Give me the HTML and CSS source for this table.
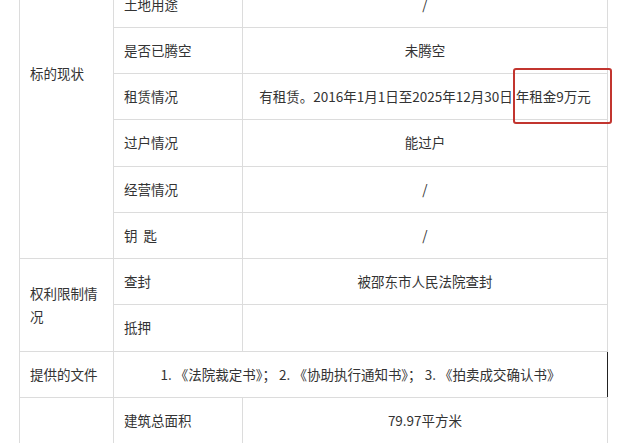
FILE: index.html
```html
<!DOCTYPE html>
<html>
<head>
  <title>标的物情况</title>
  <link rel="stylesheet" href="styles.css">
</head>
<body>
  <div class="page">
    <table class="info-table">
      <colgroup>
        <col class="col-head">
        <col class="col-name">
        <col class="col-value">
      </colgroup>
      <tbody>
        <tr>
          <td class="group" rowspan="8">标的现状</td>
          <td class="name">房屋用途</td>
          <td class="value">住宅</td>
        </tr>
        <tr>
          <td class="name">建筑结构</td>
          <td class="value">/</td>
        </tr>
        <tr>
          <td class="name">土地用途</td>
          <td class="value">/</td>
        </tr>
        <tr>
          <td class="name">是否已腾空</td>
          <td class="value">未腾空</td>
        </tr>
        <tr>
          <td class="name">租赁情况</td>
          <td class="value rent">
            有租赁。2016年1月1日至2025年12月30日 年租金9万元
            <span class="mark"></span>
          </td>
        </tr>
        <tr>
          <td class="name">过户情况</td>
          <td class="value">能过户</td>
        </tr>
        <tr>
          <td class="name">经营情况</td>
          <td class="value">/</td>
        </tr>
        <tr>
          <td class="name">钥&nbsp;&nbsp;匙</td>
          <td class="value">/</td>
        </tr>
        <tr>
          <td class="group" rowspan="2">权利限制情况</td>
          <td class="name">查封</td>
          <td class="value">被邵东市人民法院查封</td>
        </tr>
        <tr>
          <td class="name">抵押</td>
          <td class="value"></td>
        </tr>
        <tr>
          <td class="group">提供的文件</td>
          <td class="value files" colspan="2">1. 《法院裁定书》； 2. 《协助执行通知书》； 3. 《拍卖成交确认书》</td>
        </tr>
        <tr>
          <td class="group" rowspan="4">标的物情况</td>
          <td class="name">建筑总面积</td>
          <td class="value">79.97平方米</td>
        </tr>
        <tr>
          <td class="name">房屋所在层</td>
          <td class="value">/</td>
        </tr>
        <tr>
          <td class="name">房屋朝向</td>
          <td class="value">/</td>
        </tr>
        <tr>
          <td class="name">装修情况</td>
          <td class="value">/</td>
        </tr>
      </tbody>
    </table>
  </div>
</body>
</html>
```

FILE: styles.css
```css
body {
  margin: 0;
  padding: 0;
  background-color: #fff;
  font-family: "Noto Sans CJK SC", "Liberation Sans", sans-serif;
  color: #333;
}

.page {
  padding-left: 19px;
  margin-top: -112px;
}

.info-table {
  width: 588px;
  table-layout: fixed;
  border-collapse: collapse;
  font-size: 13.5px;
  line-height: 23px;
}

.col-head {
  width: 94px;
}

.col-name {
  width: 129px;
}

.col-value {
  width: 365px;
}

.info-table td {
  border: 1px solid #dcdcdc;
  padding: 11px 10px 11.25px;
  vertical-align: middle;
  text-align: left;
}

.info-table .value {
  text-align: center;
  padding-left: 4px;
  padding-right: 4px;
}

.info-table .files {
  border-right: 1px solid #222;
}

.rent {
  position: relative;
}

.mark {
  position: absolute;
  left: 270px;
  top: -6px;
  width: 95px;
  height: 52px;
  border: 2px solid #c2352f;
  border-radius: 3px;
}
```
